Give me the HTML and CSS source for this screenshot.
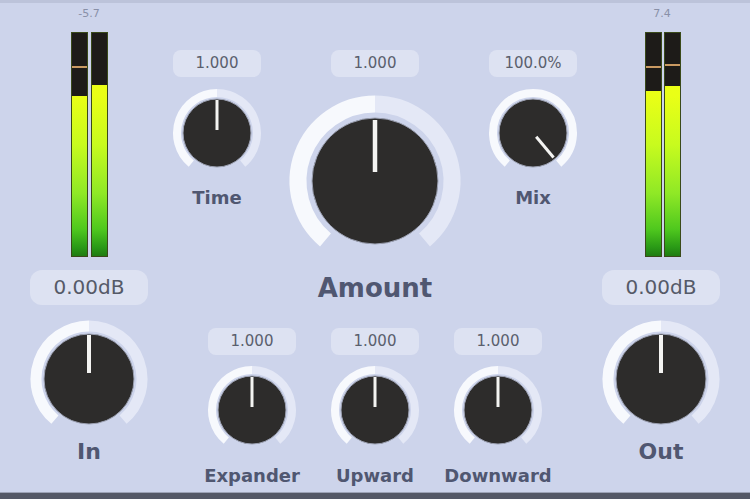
FILE: index.html
```html
<!DOCTYPE html>
<html>
<head>
<meta charset="utf-8">
<link rel="stylesheet" href="styles.css">
</head>
<body>
<div class="panel">
  <div class="side">
    <div class="peak-label">-5.7</div>
    <div class="meters">
      <div class="bar"><div class="dark" style="height:63px"></div><div class="peak" style="top:33px"></div></div>
      <div class="bar"><div class="dark" style="height:52px"></div></div>
    </div>
    <div class="value big">0.00dB</div>
    <svg class="knob-l" width="120" height="120" viewBox="0 0 120 120">
      <path class="track" d="M60 7 A53 53 0 0 1 94.07 100.6"/>
      <path class="fill" d="M25.93 100.6 A53 53 0 0 1 60 7"/>
      <circle class="cap" cx="60" cy="60" r="45"/>
      <line class="ptr" x1="60" y1="54" x2="60" y2="16" stroke-width="4"/>
    </svg>
    <div class="label l22">In</div>
  </div>

  <div class="center">
    <div class="row-top">
      <div class="item small">
        <div class="value">1.000</div>
        <svg class="knob-s" width="90" height="90" viewBox="0 0 90 90">
          <path class="track" d="M45 5 A40 40 0 0 1 70.71 75.64"/>
          <path class="fill" d="M19.29 75.64 A40 40 0 0 1 45 5"/>
          <circle class="cap" cx="45" cy="45" r="34"/>
          <line class="ptr" x1="45" y1="42" x2="45" y2="12" stroke-width="3"/>
        </svg>
        <div class="label l18">Time</div>
      </div>
      <div class="item amount">
        <div class="value">1.000</div>
        <svg class="knob-xl" width="180" height="180" viewBox="0 0 180 180">
          <path class="track" d="M90 13 A77 77 0 0 1 139.5 148.98"/>
          <path class="fill" d="M40.5 148.98 A77 77 0 0 1 90 13"/>
          <circle class="cap" cx="90" cy="90" r="63"/>
          <line class="ptr" x1="90" y1="81" x2="90" y2="29" stroke-width="4.5"/>
        </svg>
        <div class="label l26">Amount</div>
      </div>
      <div class="item small">
        <div class="value">100.0%</div>
        <svg class="knob-s" width="90" height="90" viewBox="0 0 90 90">
          <path class="fill" d="M19.29 75.64 A40 40 0 1 1 70.71 75.64"/>
          <circle class="cap" cx="45" cy="45" r="34"/>
          <line class="ptr" x1="48.2" y1="48.8" x2="65.57" y2="69.51" stroke-width="3"/>
        </svg>
        <div class="label l18">Mix</div>
      </div>
    </div>
    <div class="row-bottom">
      <div class="item small">
        <div class="value">1.000</div>
        <svg class="knob-b" width="90" height="90" viewBox="0 0 90 90">
          <path class="track" d="M45 5 A40 40 0 0 1 70.71 75.64"/>
          <path class="fill" d="M19.29 75.64 A40 40 0 0 1 45 5"/>
          <circle class="cap" cx="45" cy="45" r="34"/>
          <line class="ptr" x1="45" y1="42" x2="45" y2="12" stroke-width="3"/>
        </svg>
        <div class="label l17">Expander</div>
      </div>
      <div class="item small">
        <div class="value">1.000</div>
        <svg class="knob-b" width="90" height="90" viewBox="0 0 90 90">
          <path class="track" d="M45 5 A40 40 0 0 1 70.71 75.64"/>
          <path class="fill" d="M19.29 75.64 A40 40 0 0 1 45 5"/>
          <circle class="cap" cx="45" cy="45" r="34"/>
          <line class="ptr" x1="45" y1="42" x2="45" y2="12" stroke-width="3"/>
        </svg>
        <div class="label l17">Upward</div>
      </div>
      <div class="item small">
        <div class="value">1.000</div>
        <svg class="knob-b" width="90" height="90" viewBox="0 0 90 90">
          <path class="track" d="M45 5 A40 40 0 0 1 70.71 75.64"/>
          <path class="fill" d="M19.29 75.64 A40 40 0 0 1 45 5"/>
          <circle class="cap" cx="45" cy="45" r="34"/>
          <line class="ptr" x1="45" y1="42" x2="45" y2="12" stroke-width="3"/>
        </svg>
        <div class="label l17">Downward</div>
      </div>
    </div>
  </div>

  <div class="side">
    <div class="peak-label">7.4</div>
    <div class="meters">
      <div class="bar"><div class="dark" style="height:58px"></div><div class="peak" style="top:33px"></div></div>
      <div class="bar"><div class="dark" style="height:53px"></div><div class="peak" style="top:31px"></div></div>
    </div>
    <div class="value big">0.00dB</div>
    <svg class="knob-l" width="120" height="120" viewBox="0 0 120 120">
      <path class="track" d="M60 7 A53 53 0 0 1 94.07 100.6"/>
      <path class="fill" d="M25.93 100.6 A53 53 0 0 1 60 7"/>
      <circle class="cap" cx="60" cy="60" r="45"/>
      <line class="ptr" x1="60" y1="54" x2="60" y2="16" stroke-width="4"/>
    </svg>
    <div class="label l22">Out</div>
  </div>
</div>
</body>
</html>
```

FILE: styles.css
```css
* { box-sizing: border-box; }
html, body { margin: 0; padding: 0; }
body {
  width: 750px;
  height: 499px;
  overflow: hidden;
  font-family: "DejaVu Sans", "Noto Sans", sans-serif;
  background: #cdd4eb;
}
.panel {
  width: 750px;
  height: 499px;
  display: flex;
  background: #cdd4eb;
  border-top: 3px solid #bcc3da;
  border-bottom: 6px solid #545866;
  box-shadow: inset 0 -1px 0 #9da3b6;
}
.side {
  width: 178px;
  display: flex;
  flex-direction: column;
  align-items: center;
  padding-top: 4px;
}
.peak-label {
  height: 14px;
  font-size: 11px;
  line-height: 14px;
  color: #8990a8;
}
.meters {
  margin-top: 11px;
  display: flex;
  gap: 3px;
  height: 225px;
}
.side:last-child .meters { margin-left: 4px; gap: 2px; }
.side:last-child .peak-label { margin-left: 2px; }
.bar {
  position: relative;
  width: 17px;
  height: 225px;
  background: linear-gradient(to bottom, #f2ff14 0%, #eaff16 28%, #c8fb1e 50%, #8fe826 72%, #4fc81e 88%, #2a9a16 96%, #1f7c12 100%);
  border: 1px solid #3a4a1a;
}
.bar .dark {
  background: #1d1b18;
  width: 100%;
}
.bar .peak {
  position: absolute;
  left: 0;
  right: 0;
  height: 2px;
  background: #c99a62;
}
.value {
  height: 27px;
  width: 88px;
  border-radius: 8px;
  background: #dde2f2;
  color: #5a5f6d;
  font-size: 15px;
  line-height: 27px;
  text-align: center;
}
.value.big {
  margin-top: 13px;
  width: 118px;
  height: 35px;
  line-height: 35px;
  font-size: 20px;
  border-radius: 12px;
  color: #555a68;
}
svg { display: block; }
.track { fill: none; stroke: #e4e8f6; }
.fill { fill: none; stroke: #f7f9fd; }
.knob-s .track, .knob-s .fill, .knob-b .track, .knob-b .fill { stroke-width: 8; }
.knob-l .track, .knob-l .fill { stroke-width: 11; }
.knob-xl .track, .knob-xl .fill { stroke-width: 17; }
.cap { fill: #2d2c2b; stroke: #9ca1b2; stroke-width: 1; }
.ptr { stroke: #f4f4f2; stroke-linecap: butt; }
.knob-l { margin-top: 14px; }
.label {
  font-weight: 700;
  color: #505771;
  text-align: center;
  white-space: nowrap;
}
.l22 { font-size: 22px; line-height: 26px; }
.l18 { font-size: 18px; line-height: 24px; margin-top: 8px; }
.l17 { font-size: 18px; line-height: 24px; margin-top: 9px; }
.l26 { font-size: 26px; line-height: 32px; margin-top: 1px; }
.center {
  flex: 1;
  display: flex;
  flex-direction: column;
}
.row-top {
  margin: 0 -6px;
  padding-top: 47px;
  display: flex;
  justify-content: space-between;
  align-items: flex-start;
}
.item {
  display: flex;
  flex-direction: column;
  align-items: center;
}
.item.small { width: 90px; }
.item.amount { width: 180px; }
.knob-s { margin-top: 11px; }
.knob-xl { margin-top: 14px; }
.row-bottom {
  margin-top: 24px;
  display: flex;
  justify-content: center;
  gap: 33px;
}
.knob-b { margin-top: 10px; }
```
